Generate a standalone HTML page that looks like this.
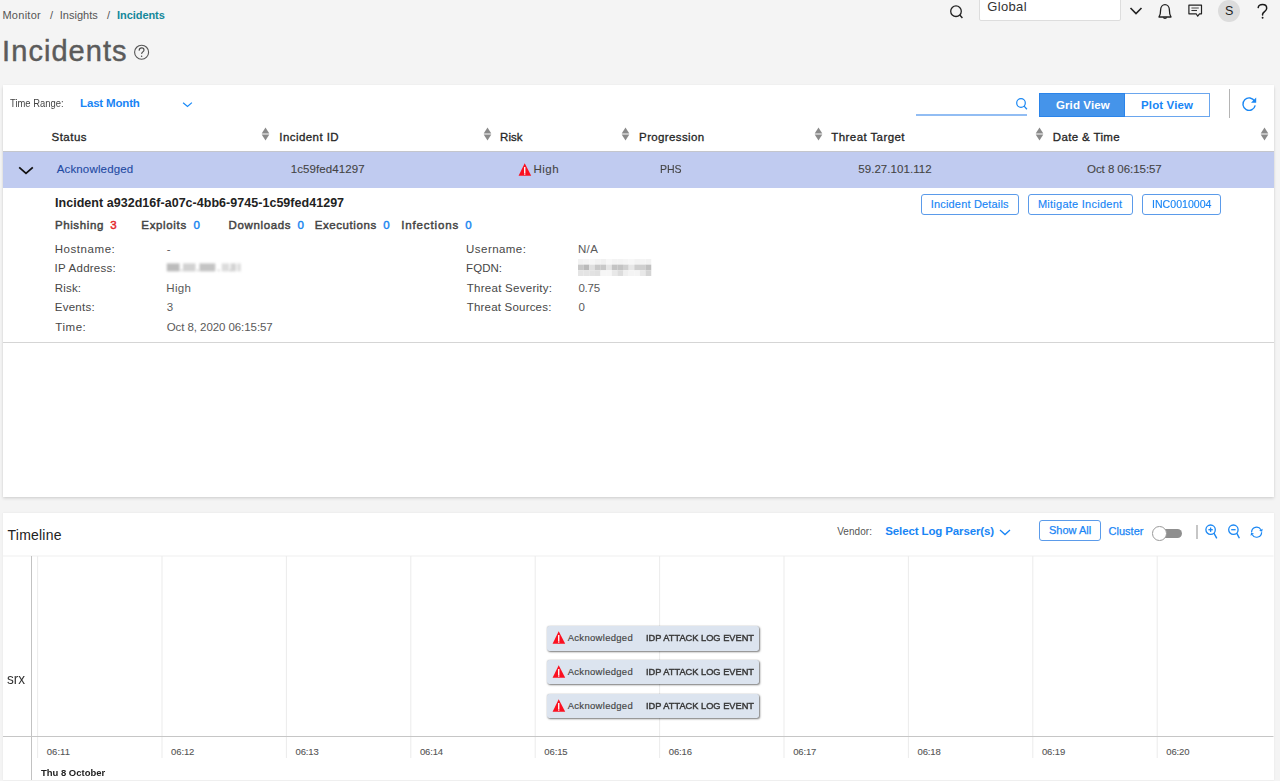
<!DOCTYPE html><html><head><meta charset="utf-8"><style>
html,body{margin:0;padding:0}
body{width:1280px;height:781px;position:relative;overflow:hidden;background:#f4f4f4;font-family:"Liberation Sans",sans-serif}
.t{position:absolute;white-space:pre}
</style></head><body>
<span class="t" style="left:2.42px;top:10.00px;font-size:11px;line-height:11px;color:#555;letter-spacing:0.279px;">Monitor</span>
<span class="t" style="left:50.00px;top:10.00px;font-size:11px;line-height:11px;color:#555;">/</span>
<span class="t" style="left:59.80px;top:10.00px;font-size:11px;line-height:11px;color:#555;">Insights</span>
<span class="t" style="left:107.00px;top:10.00px;font-size:11px;line-height:11px;color:#555;">/</span>
<span class="t" style="left:117.05px;top:10.00px;font-size:11px;line-height:11px;color:#13889b;font-weight:bold;letter-spacing:-0.066px;">Incidents</span>
<span class="t" style="left:2.12px;top:37.00px;font-size:29px;line-height:29px;color:#5b5b5b;letter-spacing:1.050px;-webkit-text-stroke:0.45px #5b5b5b;">Incidents</span>
<svg style="position:absolute;left:132px;top:43px" width="19" height="19" viewBox="0 0 19 19"><circle cx="9.6" cy="9.2" r="7" fill="none" stroke="#555" stroke-width="1.1"/><path d="M7.2,7.2 C7.3,5.6 8.4,4.9 9.7,4.9 C11.1,4.9 12,5.8 12,6.9 C12,8.6 9.9,8.9 9.7,10.4" fill="none" stroke="#4a4a4a" stroke-width="1.15" stroke-linecap="round"/><circle cx="9.6" cy="13.3" r="0.75" fill="#4a4a4a"/></svg>
<svg style="position:absolute;left:948px;top:3px" width="18" height="18" viewBox="0 0 18 18"><circle cx="8" cy="8.2" r="5.3" fill="none" stroke="#222" stroke-width="1.3"/><line x1="11.8" y1="12" x2="14.4" y2="15" stroke="#222" stroke-width="1.4"/></svg>
<div style="position:absolute;left:979px;top:-3px;width:140px;height:21.5px;background:#fff;border:1px solid #ddd;border-radius:2px"></div>
<span class="t" style="left:987.17px;top:0.00px;font-size:13px;line-height:13px;color:#333;letter-spacing:0.375px;">Global</span>
<svg style="position:absolute;left:1128px;top:5px" width="16" height="12" viewBox="0 0 16 12"><polyline points="2.5,3 8,8.6 13.5,3" fill="none" stroke="#222" stroke-width="1.6"/></svg>
<svg style="position:absolute;left:1156px;top:2px" width="18" height="18" viewBox="0 0 18 18"><path d="M3,15 C4.5,13 4.6,11.5 4.6,8 C4.6,4.8 6.6,2.6 9,2.6 C11.4,2.6 13.4,4.8 13.4,8 C13.4,11.5 13.5,13 15,15 Z" fill="none" stroke="#222" stroke-width="1.3" stroke-linejoin="round"/><path d="M7.3,15.4 C7.6,16.6 10.4,16.6 10.7,15.4" fill="none" stroke="#222" stroke-width="1.2"/></svg>
<svg style="position:absolute;left:1186px;top:2px" width="18" height="18" viewBox="0 0 18 18"><path d="M2.9,3.2 H15.5 V11.8 H13.5 L11.7,14.2 L10.2,11.8 H2.9 Z" fill="none" stroke="#222" stroke-width="1.2" stroke-linejoin="round"/><line x1="5.4" y1="6" x2="12.8" y2="6" stroke="#555" stroke-width="1.1"/><line x1="5.4" y1="8.5" x2="11" y2="8.5" stroke="#333" stroke-width="1.1"/></svg>
<div style="position:absolute;left:1217.5px;top:-0.5px;width:22.5px;height:22.5px;background:#dcdcdc;border-radius:50%"></div>
<span class="t" style="left:1224.97px;top:5.00px;font-size:12.5px;line-height:12.5px;color:#222;">S</span>
<svg style="position:absolute;left:1255px;top:2px" width="15" height="19" viewBox="0 0 15 19"><path d="M3.2,5.6 C3.6,3.4 5.4,2.6 7.5,2.6 C10.2,2.6 11.7,4.2 11.7,6.2 C11.7,9.4 7.9,9.6 7.6,12.2 L7.6,12.9" fill="none" stroke="#1a1a1a" stroke-width="1.5" stroke-linecap="round"/><circle cx="7.6" cy="15.7" r="0.95" fill="#1a1a1a"/></svg>
<div style="position:absolute;left:3px;top:85px;width:1270.5px;height:412px;background:#fff;box-shadow:0 1.5px 3px rgba(0,0,0,0.13), 0 0 2px rgba(0,0,0,0.05)"></div>
<span class="t" style="left:10.46px;top:99.00px;font-size:10px;line-height:10px;color:#444;transform:scaleX(0.9417);transform-origin:0 0;">Time Range:</span>
<span class="t" style="left:80.05px;top:98.00px;font-size:11.5px;line-height:11.5px;color:#1985f5;font-weight:bold;letter-spacing:-0.164px;">Last Month</span>
<svg style="position:absolute;left:181px;top:99px" width="14" height="10" viewBox="0 0 14 10"><polyline points="2.1,3.7 6.5,7.4 10.9,3.6" fill="none" stroke="#1a8af8" stroke-width="1.25"/></svg>
<div style="position:absolute;left:915.7px;top:114.3px;width:111px;height:1.6px;background:#92bdf3"></div>
<svg style="position:absolute;left:1014px;top:96px" width="16" height="16" viewBox="0 0 16 16"><circle cx="7" cy="7" r="4.3" fill="none" stroke="#1a87f3" stroke-width="1.2"/><line x1="10.1" y1="10.1" x2="12.9" y2="13.2" stroke="#1a87f3" stroke-width="1.3"/></svg>
<div style="position:absolute;left:1039px;top:93px;width:169px;height:22px;border:1px solid #6aa6ee;background:#fff"></div>
<div style="position:absolute;left:1039px;top:93px;width:84px;height:22px;background:#4594ea;border:1px solid #2a84ea"></div>
<span class="t" style="left:1055.90px;top:100.00px;font-size:11.5px;line-height:11.5px;color:#fff;font-weight:bold;letter-spacing:0.128px;">Grid View</span>
<span class="t" style="left:1141.05px;top:100.00px;font-size:11.5px;line-height:11.5px;color:#1985f5;font-weight:bold;letter-spacing:0.119px;">Plot View</span>
<div style="position:absolute;left:1229px;top:88.5px;width:1px;height:29.5px;background:#b4b4b4"></div>
<svg style="position:absolute;left:1240px;top:95px" width="18" height="18" viewBox="0 0 18 18"><path d="M14.6,6.2 A6.2,6.2 0 1 0 15.2,10.4" fill="none" stroke="#1a87f3" stroke-width="1.4"/><polygon points="16.2,2.6 16.2,7.8 11,7.8" fill="#1a87f3"/></svg>
<svg style="position:absolute;left:261.4px;top:127.2px" width="9" height="15" viewBox="0 0 9 15"><polygon points="4.5,0.6 8.3,6.6 0.7,6.6" fill="#8a8a8a"/><polygon points="0.7,7.6 8.3,7.6 4.5,13.6" fill="#8a8a8a"/></svg>
<svg style="position:absolute;left:482.9px;top:127.2px" width="9" height="15" viewBox="0 0 9 15"><polygon points="4.5,0.6 8.3,6.6 0.7,6.6" fill="#8a8a8a"/><polygon points="0.7,7.6 8.3,7.6 4.5,13.6" fill="#8a8a8a"/></svg>
<svg style="position:absolute;left:621px;top:127.2px" width="9" height="15" viewBox="0 0 9 15"><polygon points="4.5,0.6 8.3,6.6 0.7,6.6" fill="#8a8a8a"/><polygon points="0.7,7.6 8.3,7.6 4.5,13.6" fill="#8a8a8a"/></svg>
<svg style="position:absolute;left:813.6px;top:127.2px" width="9" height="15" viewBox="0 0 9 15"><polygon points="4.5,0.6 8.3,6.6 0.7,6.6" fill="#8a8a8a"/><polygon points="0.7,7.6 8.3,7.6 4.5,13.6" fill="#8a8a8a"/></svg>
<svg style="position:absolute;left:1035.4px;top:127.2px" width="9" height="15" viewBox="0 0 9 15"><polygon points="4.5,0.6 8.3,6.6 0.7,6.6" fill="#8a8a8a"/><polygon points="0.7,7.6 8.3,7.6 4.5,13.6" fill="#8a8a8a"/></svg>
<svg style="position:absolute;left:1259.9px;top:127.2px" width="9" height="15" viewBox="0 0 9 15"><polygon points="4.5,0.6 8.3,6.6 0.7,6.6" fill="#8a8a8a"/><polygon points="0.7,7.6 8.3,7.6 4.5,13.6" fill="#8a8a8a"/></svg>
<span class="t" style="left:51.50px;top:132.00px;font-size:11.5px;line-height:11.5px;color:#262626;letter-spacing:0.490px;-webkit-text-stroke:0.3px #262626;">Status</span>
<span class="t" style="left:279.30px;top:132.00px;font-size:11.5px;line-height:11.5px;color:#262626;letter-spacing:0.433px;-webkit-text-stroke:0.3px #262626;">Incident ID</span>
<span class="t" style="left:500.12px;top:132.00px;font-size:11.5px;line-height:11.5px;color:#262626;-webkit-text-stroke:0.3px #262626;">Risk</span>
<span class="t" style="left:639.12px;top:132.00px;font-size:11.5px;line-height:11.5px;color:#262626;letter-spacing:0.365px;-webkit-text-stroke:0.3px #262626;">Progression</span>
<span class="t" style="left:831.35px;top:132.00px;font-size:11.5px;line-height:11.5px;color:#262626;letter-spacing:0.410px;-webkit-text-stroke:0.3px #262626;">Threat Target</span>
<span class="t" style="left:1052.72px;top:132.00px;font-size:11.5px;line-height:11.5px;color:#262626;letter-spacing:0.372px;-webkit-text-stroke:0.3px #262626;">Date &amp; Time</span>
<div style="position:absolute;left:3px;top:151px;width:1270.5px;height:37px;background:#c0cbf0"></div>
<div style="position:absolute;left:3px;top:150.5px;width:1270.5px;height:1px;background:#c4c6cc"></div>
<svg style="position:absolute;left:17px;top:164px" width="18" height="12" viewBox="0 0 18 12"><polyline points="2.2,3.4 9,9.4 15.8,3.4" fill="none" stroke="#111" stroke-width="1.8"/></svg>
<span class="t" style="left:56.70px;top:164.00px;font-size:11.5px;line-height:11.5px;color:#1f4aa3;letter-spacing:0.155px;-webkit-text-stroke:0.1px #1f4aa3;">Acknowledged</span>
<span class="t" style="left:290.73px;top:164.00px;font-size:11.5px;line-height:11.5px;color:#444;letter-spacing:0.082px;-webkit-text-stroke:0.1px #444;">1c59fed41297</span>
<svg style="position:absolute;left:518px;top:162px" width="14" height="14" viewBox="0 0 14 14"><polygon points="6.7,1.2 13.2,13.8 0.6,13.8" fill="#fb1020"/><rect x="6.05" y="5" width="1.35" height="6.6" fill="#fff"/><rect x="6.05" y="11.9" width="1.35" height="1" fill="#fff" fill-opacity="0.75"/></svg>
<span class="t" style="left:533.52px;top:164.00px;font-size:11.5px;line-height:11.5px;color:#444;letter-spacing:0.467px;-webkit-text-stroke:0.1px #444;">High</span>
<span class="t" style="left:660.45px;top:164.00px;font-size:11.5px;line-height:11.5px;color:#444;transform:scaleX(0.9146);transform-origin:0 0;-webkit-text-stroke:0.1px #444;">PHS</span>
<span class="t" style="left:858.25px;top:164.00px;font-size:11.5px;line-height:11.5px;color:#444;letter-spacing:0.052px;-webkit-text-stroke:0.1px #444;">59.27.101.112</span>
<span class="t" style="left:1087.00px;top:164.00px;font-size:11.5px;line-height:11.5px;color:#444;letter-spacing:-0.052px;-webkit-text-stroke:0.1px #444;">Oct 8 06:15:57</span>
<span class="t" style="left:55.05px;top:197.00px;font-size:12.5px;line-height:12.5px;color:#222;font-weight:bold;letter-spacing:0.031px;">Incident a932d16f-a07c-4bb6-9745-1c59fed41297</span>
<div style="position:absolute;left:921px;top:194px;width:95.5px;height:18.5px;border:1px solid #5b9bea;border-radius:3px;background:#fff"></div><span class="t" style="left:930.75px;top:199.00px;font-size:11px;line-height:11px;color:#1985f5;letter-spacing:0.175px;-webkit-text-stroke:0.15px #1985f5;">Incident Details</span>
<div style="position:absolute;left:1028px;top:194px;width:102.5px;height:18.5px;border:1px solid #5b9bea;border-radius:3px;background:#fff"></div><span class="t" style="left:1037.88px;top:199.00px;font-size:11px;line-height:11px;color:#1985f5;letter-spacing:0.258px;-webkit-text-stroke:0.15px #1985f5;">Mitigate Incident</span>
<div style="position:absolute;left:1142px;top:194px;width:77px;height:18.5px;border:1px solid #5b9bea;border-radius:3px;background:#fff"></div><span class="t" style="left:1151.54px;top:199.00px;font-size:11px;line-height:11px;color:#1985f5;transform:scaleX(0.9628);transform-origin:0 0;-webkit-text-stroke:0.15px #1985f5;">INC0010004</span>
<span class="t" style="left:54.92px;top:220.00px;font-size:11.5px;line-height:11.5px;color:#444;letter-spacing:0.614px;-webkit-text-stroke:0.45px #444;">Phishing</span>
<span class="t" style="left:110.33px;top:220.00px;font-size:11.5px;line-height:11.5px;color:#e3262a;-webkit-text-stroke:0.45px #e3262a;">3</span>
<span class="t" style="left:141.32px;top:220.00px;font-size:11.5px;line-height:11.5px;color:#444;letter-spacing:0.657px;-webkit-text-stroke:0.45px #444;">Exploits</span>
<span class="t" style="left:193.43px;top:220.00px;font-size:11.5px;line-height:11.5px;color:#1a86f0;-webkit-text-stroke:0.45px #1a86f0;">0</span>
<span class="t" style="left:228.43px;top:220.00px;font-size:11.5px;line-height:11.5px;color:#444;letter-spacing:0.659px;-webkit-text-stroke:0.45px #444;">Downloads</span>
<span class="t" style="left:297.62px;top:220.00px;font-size:11.5px;line-height:11.5px;color:#1a86f0;-webkit-text-stroke:0.45px #1a86f0;">0</span>
<span class="t" style="left:314.73px;top:220.00px;font-size:11.5px;line-height:11.5px;color:#444;letter-spacing:0.578px;-webkit-text-stroke:0.45px #444;">Executions</span>
<span class="t" style="left:383.23px;top:220.00px;font-size:11.5px;line-height:11.5px;color:#1a86f0;-webkit-text-stroke:0.45px #1a86f0;">0</span>
<span class="t" style="left:401.30px;top:220.00px;font-size:11.5px;line-height:11.5px;color:#444;letter-spacing:0.847px;-webkit-text-stroke:0.45px #444;">Infections</span>
<span class="t" style="left:465.23px;top:220.00px;font-size:11.5px;line-height:11.5px;color:#1a86f0;-webkit-text-stroke:0.45px #1a86f0;">0</span>
<span class="t" style="left:54.73px;top:244.00px;font-size:11.5px;line-height:11.5px;color:#474747;letter-spacing:0.559px;">Hostname:</span>
<span class="t" style="left:166.70px;top:244.00px;font-size:11.5px;line-height:11.5px;color:#5a5a5a;">-</span>
<span class="t" style="left:54.60px;top:263.00px;font-size:11.5px;line-height:11.5px;color:#474747;letter-spacing:0.250px;">IP Address:</span>
<span class="t" style="left:54.73px;top:283.00px;font-size:11.5px;line-height:11.5px;color:#474747;letter-spacing:0.194px;">Risk:</span>
<span class="t" style="left:166.32px;top:283.00px;font-size:11.5px;line-height:11.5px;color:#5a5a5a;letter-spacing:0.333px;">High</span>
<span class="t" style="left:54.73px;top:302.00px;font-size:11.5px;line-height:11.5px;color:#474747;letter-spacing:0.254px;">Events:</span>
<span class="t" style="left:166.82px;top:302.00px;font-size:11.5px;line-height:11.5px;color:#5a5a5a;">3</span>
<span class="t" style="left:55.35px;top:322.00px;font-size:11.5px;line-height:11.5px;color:#474747;letter-spacing:0.525px;">Time:</span>
<span class="t" style="left:166.70px;top:322.00px;font-size:11.5px;line-height:11.5px;color:#5a5a5a;letter-spacing:-0.072px;">Oct 8, 2020 06:15:57</span>
<span class="t" style="left:466.12px;top:244.00px;font-size:11.5px;line-height:11.5px;color:#474747;letter-spacing:0.444px;">Username:</span>
<span class="t" style="left:577.88px;top:244.00px;font-size:11.5px;line-height:11.5px;color:#5a5a5a;letter-spacing:0.375px;">N/A</span>
<span class="t" style="left:466.12px;top:263.00px;font-size:11.5px;line-height:11.5px;color:#474747;letter-spacing:0.031px;">FQDN:</span>
<span class="t" style="left:466.75px;top:283.00px;font-size:11.5px;line-height:11.5px;color:#474747;letter-spacing:0.275px;">Threat Severity:</span>
<span class="t" style="left:578.38px;top:283.00px;font-size:11.5px;line-height:11.5px;color:#5a5a5a;letter-spacing:-0.208px;">0.75</span>
<span class="t" style="left:466.75px;top:302.00px;font-size:11.5px;line-height:11.5px;color:#474747;letter-spacing:0.200px;">Threat Sources:</span>
<span class="t" style="left:578.38px;top:302.00px;font-size:11.5px;line-height:11.5px;color:#5a5a5a;">0</span>
<svg style="position:absolute;left:164px;top:260px;filter:blur(0.85px)" width="82" height="14"><rect x="2.8" y="3.4" width="12.8" height="8" fill="#bcbcbc"/><rect x="19.0" y="3.4" width="12.5" height="8" fill="#d2d2d2"/><rect x="35.4" y="3.4" width="15.9" height="8" fill="#c4c4c4"/><rect x="57.7" y="3.4" width="7.3" height="8" fill="#dcdcdc"/><rect x="66.5" y="3.4" width="5.5" height="8" fill="#d4d4d4"/><rect x="73.0" y="3.4" width="4.0" height="8" fill="#e0e0e0"/><rect x="16.8" y="9.6" width="1.3" height="1.6" fill="#bbb"/><rect x="33.0" y="9.6" width="1.3" height="1.6" fill="#bbb"/><rect x="54.0" y="9.6" width="1.3" height="1.6" fill="#bbb"/><rect x="65.7" y="9.6" width="1.3" height="1.6" fill="#bbb"/></svg>
<svg style="position:absolute;left:578px;top:258.5px;filter:blur(0.5px)" width="74" height="17"><rect x="0.00" y="0.00" width="5.7" height="5.7" fill="#f2f2f2"/><rect x="5.63" y="0.00" width="5.7" height="5.7" fill="#f4f4f4"/><rect x="11.26" y="0.00" width="5.7" height="5.7" fill="#f6f6f6"/><rect x="16.89" y="0.00" width="5.7" height="5.7" fill="#f2f2f2"/><rect x="22.52" y="0.00" width="5.7" height="5.7" fill="#f0f0f0"/><rect x="28.15" y="0.00" width="5.7" height="5.7" fill="#f7f7f7"/><rect x="33.78" y="0.00" width="5.7" height="5.7" fill="#f3f3f3"/><rect x="39.41" y="0.00" width="5.7" height="5.7" fill="#f3f3f3"/><rect x="45.04" y="0.00" width="5.7" height="5.7" fill="#f5f5f5"/><rect x="50.67" y="0.00" width="5.7" height="5.7" fill="#f7f7f7"/><rect x="56.30" y="0.00" width="5.7" height="5.7" fill="#f3f3f3"/><rect x="61.93" y="0.00" width="5.7" height="5.7" fill="#f4f4f4"/><rect x="67.56" y="0.00" width="5.7" height="5.7" fill="#f2f2f2"/><rect x="0.00" y="5.63" width="5.7" height="5.7" fill="#c8c8c8"/><rect x="5.63" y="5.63" width="5.7" height="5.7" fill="#bababa"/><rect x="11.26" y="5.63" width="5.7" height="5.7" fill="#e0e0e0"/><rect x="16.89" y="5.63" width="5.7" height="5.7" fill="#c8c8c8"/><rect x="22.52" y="5.63" width="5.7" height="5.7" fill="#c8c8c8"/><rect x="28.15" y="5.63" width="5.7" height="5.7" fill="#e6e6e6"/><rect x="33.78" y="5.63" width="5.7" height="5.7" fill="#c4c4c4"/><rect x="39.41" y="5.63" width="5.7" height="5.7" fill="#c4c4c4"/><rect x="45.04" y="5.63" width="5.7" height="5.7" fill="#d0d0d0"/><rect x="50.67" y="5.63" width="5.7" height="5.7" fill="#e8e8e8"/><rect x="56.30" y="5.63" width="5.7" height="5.7" fill="#cfcfcf"/><rect x="61.93" y="5.63" width="5.7" height="5.7" fill="#cfcfcf"/><rect x="67.56" y="5.63" width="5.7" height="5.7" fill="#c0c0c0"/><rect x="0.00" y="11.26" width="5.7" height="5.7" fill="#e4e4e4"/><rect x="5.63" y="11.26" width="5.7" height="5.7" fill="#e4e4e4"/><rect x="11.26" y="11.26" width="5.7" height="5.7" fill="#e2e2e2"/><rect x="16.89" y="11.26" width="5.7" height="5.7" fill="#e0e0e0"/><rect x="22.52" y="11.26" width="5.7" height="5.7" fill="#f6f6f6"/><rect x="28.15" y="11.26" width="5.7" height="5.7" fill="#f6f6f6"/><rect x="33.78" y="11.26" width="5.7" height="5.7" fill="#e8e8e8"/><rect x="39.41" y="11.26" width="5.7" height="5.7" fill="#dcdcdc"/><rect x="45.04" y="11.26" width="5.7" height="5.7" fill="#efefef"/><rect x="50.67" y="11.26" width="5.7" height="5.7" fill="#f4f4f4"/><rect x="56.30" y="11.26" width="5.7" height="5.7" fill="#f4f4f4"/><rect x="61.93" y="11.26" width="5.7" height="5.7" fill="#e8e8e8"/><rect x="67.56" y="11.26" width="5.7" height="5.7" fill="#d4d4d4"/></svg>
<div style="position:absolute;left:3px;top:342px;width:1270.5px;height:1px;background:#d5d5d5"></div>
<div style="position:absolute;left:3px;top:513px;width:1270.5px;height:267px;background:#fff;box-shadow:0 -0.5px 2px rgba(0,0,0,0.07)"></div>
<span class="t" style="left:7.55px;top:528.00px;font-size:14px;line-height:14px;color:#222;letter-spacing:0.225px;">Timeline</span>
<span class="t" style="left:837.20px;top:527.00px;font-size:10px;line-height:10px;color:#555;letter-spacing:0.062px;">Vendor:</span>
<span class="t" style="left:885.23px;top:526.00px;font-size:11.5px;line-height:11.5px;color:#1985f5;font-weight:bold;letter-spacing:-0.118px;">Select Log Parser(s)</span>
<svg style="position:absolute;left:998px;top:527px" width="14" height="10" viewBox="0 0 14 10"><polyline points="2,3 7,7.6 12,3" fill="none" stroke="#1985f5" stroke-width="1.3"/></svg>
<div style="position:absolute;left:1038.7px;top:520.2px;width:60px;height:18.5px;border:1px solid #5b9bea;border-radius:3px;background:#fff"></div>
<span class="t" style="left:1049.00px;top:525.00px;font-size:11px;line-height:11px;color:#1985f5;-webkit-text-stroke:0.25px #1985f5;">Show All</span>
<span class="t" style="left:1108.50px;top:526.00px;font-size:11px;line-height:11px;color:#1985f5;letter-spacing:0.029px;-webkit-text-stroke:0.25px #1985f5;">Cluster</span>
<div style="position:absolute;left:1159.5px;top:529.2px;width:22.6px;height:9.3px;background:#8f8f8f;border-radius:4.65px"></div>
<div style="position:absolute;left:1151.8px;top:526.3px;width:12.8px;height:12.8px;background:#fff;border:1px solid #9a9a9a;border-radius:50%"></div>
<div style="position:absolute;left:1196.2px;top:524.8px;width:1.4px;height:14.2px;background:#c6c6c6"></div>
<svg style="position:absolute;left:1203px;top:523px" width="16" height="17" viewBox="0 0 16 17"><circle cx="7.6" cy="6.7" r="4.7" fill="none" stroke="#1a87f3" stroke-width="1.3"/><line x1="10.9" y1="10.1" x2="13.8" y2="15.3" stroke="#1a87f3" stroke-width="1.4"/><line x1="5.4" y1="6.7" x2="9.8" y2="6.7" stroke="#1a87f3" stroke-width="1.3"/><line x1="7.6" y1="4.5" x2="7.6" y2="8.9" stroke="#1a87f3" stroke-width="1.3"/></svg>
<svg style="position:absolute;left:1226px;top:523px" width="16" height="17" viewBox="0 0 16 17"><circle cx="7.4" cy="6.7" r="4.7" fill="none" stroke="#1a87f3" stroke-width="1.3"/><line x1="10.7" y1="10.1" x2="13.4" y2="15.3" stroke="#1a87f3" stroke-width="1.4"/><line x1="5.2" y1="6.7" x2="9.6" y2="6.7" stroke="#1a87f3" stroke-width="1.3"/></svg>
<svg style="position:absolute;left:1249px;top:524px" width="16" height="16" viewBox="0 0 16 16"><path d="M2.6,8.2 A5,5 0 0 1 11.93,5.7" fill="none" stroke="#1a87f3" stroke-width="1.2"/><polygon points="13.13,7.78 10.2,6.7 13.66,4.7" fill="#1a87f3"/><path d="M12.6,8.2 A5,5 0 0 1 3.27,10.7" fill="none" stroke="#1a87f3" stroke-width="1.2"/><polygon points="2.07,8.62 5.0,9.7 1.54,11.7" fill="#1a87f3"/></svg>
<svg style="position:absolute;left:0;top:0" width="1280" height="781"><rect x="3" y="555.5" width="1270.5" height="1" fill="#f0f0f0"/><rect x="37.10" y="556" width="1" height="202" fill="#ebebeb"/><rect x="161.50" y="556" width="1" height="202" fill="#ebebeb"/><rect x="285.90" y="556" width="1" height="202" fill="#ebebeb"/><rect x="410.30" y="556" width="1" height="202" fill="#ebebeb"/><rect x="534.70" y="556" width="1" height="202" fill="#ebebeb"/><rect x="659.10" y="556" width="1" height="202" fill="#ebebeb"/><rect x="783.50" y="556" width="1" height="202" fill="#ebebeb"/><rect x="907.90" y="556" width="1" height="202" fill="#ebebeb"/><rect x="1032.30" y="556" width="1" height="202" fill="#ebebeb"/><rect x="1156.70" y="556" width="1" height="202" fill="#ebebeb"/><rect x="31" y="556" width="1" height="224" fill="#c2c2c2"/><rect x="3" y="736" width="1270.5" height="1" fill="#c6c6c6"/></svg>
<span class="t" style="left:7.34px;top:672.00px;font-size:14px;line-height:14px;color:#333;transform:scaleX(0.9710);transform-origin:0 0;">srx</span>
<span class="t" style="left:46.73px;top:747.00px;font-size:9.5px;line-height:9.5px;color:#555;letter-spacing:0.062px;-webkit-text-stroke:0.1px #555;">06:11</span>
<span class="t" style="left:171.12px;top:747.00px;font-size:9.5px;line-height:9.5px;color:#555;letter-spacing:-0.125px;-webkit-text-stroke:0.1px #555;">06:12</span>
<span class="t" style="left:295.53px;top:747.00px;font-size:9.5px;line-height:9.5px;color:#555;letter-spacing:-0.125px;-webkit-text-stroke:0.1px #555;">06:13</span>
<span class="t" style="left:419.93px;top:747.00px;font-size:9.5px;line-height:9.5px;color:#555;letter-spacing:-0.156px;-webkit-text-stroke:0.1px #555;">06:14</span>
<span class="t" style="left:544.33px;top:747.00px;font-size:9.5px;line-height:9.5px;color:#555;letter-spacing:-0.125px;-webkit-text-stroke:0.1px #555;">06:15</span>
<span class="t" style="left:668.73px;top:747.00px;font-size:9.5px;line-height:9.5px;color:#555;letter-spacing:-0.125px;-webkit-text-stroke:0.1px #555;">06:16</span>
<span class="t" style="left:793.13px;top:747.00px;font-size:9.5px;line-height:9.5px;color:#555;letter-spacing:-0.125px;-webkit-text-stroke:0.1px #555;">06:17</span>
<span class="t" style="left:917.53px;top:747.00px;font-size:9.5px;line-height:9.5px;color:#555;letter-spacing:-0.125px;-webkit-text-stroke:0.1px #555;">06:18</span>
<span class="t" style="left:1041.92px;top:747.00px;font-size:9.5px;line-height:9.5px;color:#555;letter-spacing:-0.125px;-webkit-text-stroke:0.1px #555;">06:19</span>
<span class="t" style="left:1166.33px;top:747.00px;font-size:9.5px;line-height:9.5px;color:#555;letter-spacing:-0.156px;-webkit-text-stroke:0.1px #555;">06:20</span>
<span class="t" style="left:41.48px;top:768.00px;font-size:9.5px;line-height:9.5px;color:#222;font-weight:bold;transform:scaleX(0.9961);transform-origin:0 0;">Thu 8 October</span>
<div style="position:absolute;left:547.4px;top:626.00px;width:211.3px;height:24.6px;background:#dce4ef;border-radius:2.5px;box-shadow:1px 1px 2px rgba(0,0,0,0.5), 0 0 1.5px rgba(0,0,0,0.25)"></div>
<svg style="position:absolute;left:552px;top:630.00px" width="14" height="14" viewBox="0 0 14 14"><polygon points="6.7,1.2 13.2,13.8 0.6,13.8" fill="#fb1020"/><rect x="6.05" y="5" width="1.35" height="6.6" fill="#fff"/><rect x="6.05" y="11.9" width="1.35" height="1" fill="#fff" fill-opacity="0.75"/></svg>
<span class="t" style="left:567.70px;top:633.00px;font-size:9.5px;line-height:9.5px;color:#444;letter-spacing:0.295px;-webkit-text-stroke:0.15px #444;">Acknowledged</span>
<span class="t" style="left:646.45px;top:633.00px;font-size:9.5px;line-height:9.5px;color:#3a3a3a;transform:scaleX(0.9740);transform-origin:0 0;-webkit-text-stroke:0.45px #3a3a3a;">IDP ATTACK LOG EVENT</span>
<div style="position:absolute;left:547.4px;top:659.80px;width:211.3px;height:24.6px;background:#dce4ef;border-radius:2.5px;box-shadow:1px 1px 2px rgba(0,0,0,0.5), 0 0 1.5px rgba(0,0,0,0.25)"></div>
<svg style="position:absolute;left:552px;top:663.80px" width="14" height="14" viewBox="0 0 14 14"><polygon points="6.7,1.2 13.2,13.8 0.6,13.8" fill="#fb1020"/><rect x="6.05" y="5" width="1.35" height="6.6" fill="#fff"/><rect x="6.05" y="11.9" width="1.35" height="1" fill="#fff" fill-opacity="0.75"/></svg>
<span class="t" style="left:567.70px;top:667.00px;font-size:9.5px;line-height:9.5px;color:#444;letter-spacing:0.295px;-webkit-text-stroke:0.15px #444;">Acknowledged</span>
<span class="t" style="left:646.45px;top:667.00px;font-size:9.5px;line-height:9.5px;color:#3a3a3a;transform:scaleX(0.9740);transform-origin:0 0;-webkit-text-stroke:0.45px #3a3a3a;">IDP ATTACK LOG EVENT</span>
<div style="position:absolute;left:547.4px;top:693.60px;width:211.3px;height:24.6px;background:#dce4ef;border-radius:2.5px;box-shadow:1px 1px 2px rgba(0,0,0,0.5), 0 0 1.5px rgba(0,0,0,0.25)"></div>
<svg style="position:absolute;left:552px;top:697.60px" width="14" height="14" viewBox="0 0 14 14"><polygon points="6.7,1.2 13.2,13.8 0.6,13.8" fill="#fb1020"/><rect x="6.05" y="5" width="1.35" height="6.6" fill="#fff"/><rect x="6.05" y="11.9" width="1.35" height="1" fill="#fff" fill-opacity="0.75"/></svg>
<span class="t" style="left:567.70px;top:701.00px;font-size:9.5px;line-height:9.5px;color:#444;letter-spacing:0.295px;-webkit-text-stroke:0.15px #444;">Acknowledged</span>
<span class="t" style="left:646.45px;top:701.00px;font-size:9.5px;line-height:9.5px;color:#3a3a3a;transform:scaleX(0.9740);transform-origin:0 0;-webkit-text-stroke:0.45px #3a3a3a;">IDP ATTACK LOG EVENT</span>
</body></html>
